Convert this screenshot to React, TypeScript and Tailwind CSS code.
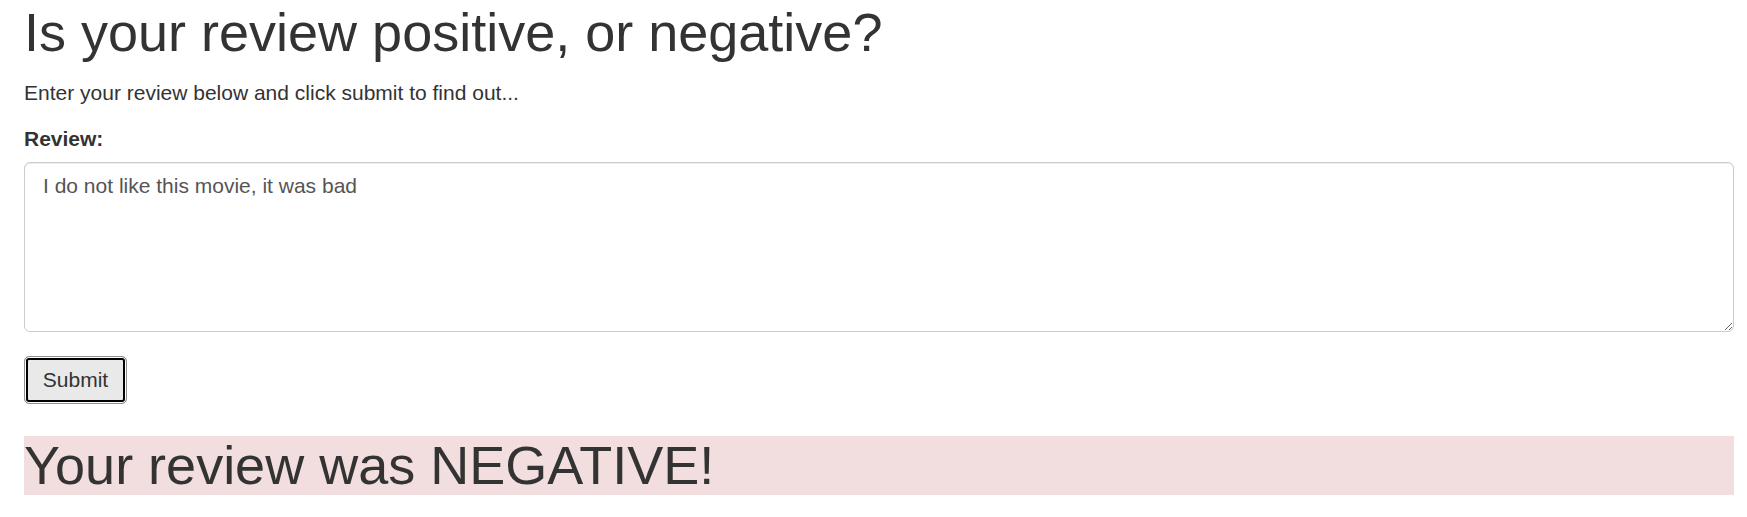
import React, { useState } from "react";

function App() {
  const [review, setReview] = useState("I do not like this movie, it was bad");

  return (
    <div
      className="pl-[24px] pr-[13px] text-[#333]"
      style={{ fontFamily: '"Liberation Sans", Arial, sans-serif' }}
    >
      <h1 className="m-0 pt-[3px] text-[54px] font-normal leading-[59.4px]">
        Is your review positive, or negative?
      </h1>
      <p className="mt-[16px] text-[21px] leading-[30px]">
        Enter your review below and click submit to find out...
      </p>
      <form
        onSubmit={(event) => {
          event.preventDefault();
        }}
      >
        <label className="mt-[16px] mb-[7.5px] block text-[21px] font-bold leading-[30px]">
          Review:
        </label>
        <textarea
          className="block h-[170px] w-full rounded-[6px] border border-[#ccc] bg-white px-[18px] pt-[8px] text-[21px] leading-[30px] text-[#555] shadow-[inset_0_1px_1px_rgba(0,0,0,0.075)] focus:outline-none"
          value={review}
          onChange={(event) => setReview(event.target.value)}
        />
        <button
          type="submit"
          className="mt-[24px] block h-[48px] w-[103px] rounded-[5px] border border-[#8f8f8f] bg-[#e9e9e9] text-[21px] leading-[30px] text-[#333] shadow-[inset_0_0_0_1px_#fff,inset_0_0_0_3px_#000]"
        >
          Submit
        </button>
      </form>
      <h1 className="mt-[32px] bg-[#f2dede] text-[54px] font-normal leading-[59.4px]">
        Your review was NEGATIVE!
      </h1>
    </div>
  );
}

export default App;
